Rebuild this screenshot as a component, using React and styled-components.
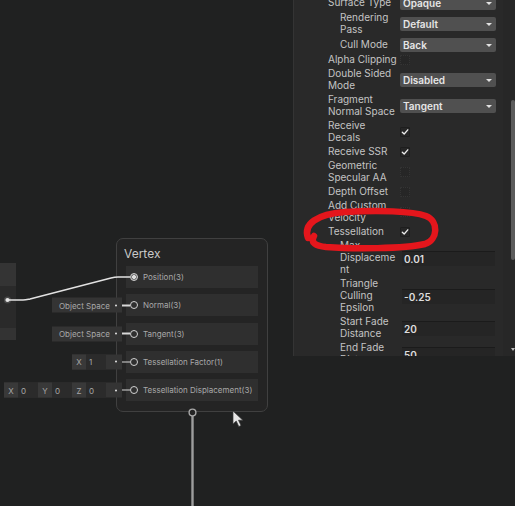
import React from "react";
import styled, { createGlobalStyle } from "styled-components";

const GlobalStyle = createGlobalStyle`
  html, body {
    margin: 0;
    padding: 0;
    background: #202121;
  }
  body {
    font-family: Inter, "Noto Sans", sans-serif;
  }
`;

const Canvas = styled.div`
  position: relative;
  width: 515px;
  height: 506px;
  overflow: hidden;
  background: #202121;
`;

/* ---------- graph inspector ---------- */

const Inspector = styled.div`
  position: absolute;
  left: 293px;
  top: 0;
  width: 222px;
  height: 356px;
  box-sizing: border-box;
  background: #292929;
  border-left: 1px solid #343434;
  overflow: hidden;
`;

const PropList = styled.div`
  display: flex;
  flex-direction: column;
  gap: 2px;
  margin-top: -5px;
`;

const PropRow = styled.div`
  display: flex;
  align-items: center;
  min-height: 12px;
  padding-left: 34px;
`;

const PropLabel = styled.div`
  width: ${(p) => 72 - p.$indent}px;
  margin-left: ${(p) => p.$indent}px;
  font-size: 10px;
  line-height: 12px;
  color: #c4c4c4;
  white-space: nowrap;
`;

const Value = styled.div`
  width: 96px;
  display: flex;
  transform: translateY(1px);
`;

const Dropdown = styled.div`
  width: 96px;
  height: 14px;
  box-sizing: border-box;
  padding: 0 4px 0 3px;
  display: flex;
  align-items: center;
  justify-content: space-between;
  background: #505050;
  border-radius: 2px;
  font-size: 10px;
  font-weight: 600;
  color: #e6e6e6;
`;

const Caret = styled.span`
  width: 0;
  height: 0;
  border-left: 3px solid transparent;
  border-right: 3px solid transparent;
  border-top: 3.5px solid #e2e2e2;
`;

const Checkbox = styled.div`
  width: 10px;
  height: 10px;
  box-sizing: border-box;
  border: 1px solid ${(p) => (p.$checked ? "#1e1e1e" : "#343434")};
  border-style: ${(p) => (p.$checked ? "solid" : "dotted")};
  background: #262626;
  border-radius: 1px;
  display: flex;
  align-items: center;
  justify-content: center;
`;

const FloatField = styled.div`
  width: 93px;
  height: 15px;
  margin-left: 1.5px;
  box-sizing: border-box;
  padding-left: 2.5px;
  display: flex;
  align-items: center;
  background: #252525;
  border-top: 1px solid #1b1b1b;
  font-size: 10px;
  font-weight: 600;
  color: #dedede;
`;

const ScrollTrack = styled.div`
  position: absolute;
  right: 0;
  top: 0;
  bottom: 0;
  width: 12px;
  background: #272727;
`;

const ScrollThumb = styled.div`
  position: absolute;
  right: 0;
  top: 100px;
  width: 4px;
  height: 160px;
  border-radius: 2px;
  background: #5b5b5b;
`;

const ScrollArrow = styled.span`
  position: absolute;
  right: 0;
  bottom: 5px;
  width: 0;
  height: 0;
  border-left: 2.5px solid transparent;
  border-right: 2.5px solid transparent;
  border-top: 3px solid #bdbdbd;
`;

/* ---------- graph nodes ---------- */

const Node = styled.div`
  position: absolute;
  left: 116px;
  top: 238px;
  width: 152px;
  height: 174px;
  box-sizing: border-box;
  border: 1px solid #404040;
  border-radius: 7px;
  background: #242424;
`;

const NodeTitle = styled.div`
  padding: 7px 0 0 7px;
  font-size: 12px;
  line-height: 16px;
  color: #c8c8c8;
`;

const PortList = styled.div`
  display: flex;
  flex-direction: column;
  gap: 6.3px;
  padding: 4px 9px 0 9px;
`;

const PortRow = styled.div`
  position: relative;
  height: 22px;
  display: flex;
  align-items: center;
  padding-left: 4px;
  background: #2f2f2f;
`;

const PortCircle = styled.span`
  width: 8px;
  height: 8px;
  box-sizing: border-box;
  border-radius: 50%;
  border: 1.5px solid #d2d2d2;
  background: ${(p) =>
    p.$connected
      ? "radial-gradient(circle, #dcdcdc 0 1.6px, #6a6a6a 2.2px)"
      : "#2f2f2f"};
`;

const PortLabel = styled.span`
  margin-left: 5px;
  font-size: 8px;
  color: #a9a9a9;
  white-space: nowrap;
`;

const InlineInput = styled.div`
  position: absolute;
  right: calc(100% - 4px);
  top: 50%;
  transform: translateY(-50%);
  display: flex;
  align-items: center;
`;

const InlineBox = styled.div`
  height: 15px;
  display: flex;
  background: #343434;
  font-size: 8px;
  color: #a8a8a8;
`;

const InlineText = styled.span`
  width: 54px;
  box-sizing: border-box;
  padding-left: 7px;
  display: flex;
  align-items: center;
  white-space: nowrap;
`;

const AxisLabel = styled.span`
  width: 14px;
  display: flex;
  align-items: center;
  justify-content: center;
  background: #393939;
`;

const AxisField = styled.span`
  width: 20px;
  box-sizing: border-box;
  padding-left: 3px;
  display: flex;
  align-items: center;
  background: #2b2b2b;
`;

const DotCell = styled.span`
  width: 16px;
  box-sizing: border-box;
  padding-right: 5px;
  display: flex;
  align-items: center;
  justify-content: flex-end;
  &::after {
    content: "";
    width: 2px;
    height: 2px;
    border-radius: 50%;
    background: #e4e4e4;
  }
`;

const Wire = styled.span`
  width: 8px;
  height: 1.5px;
  background: #d8d8d8;
`;

const LeftNode = styled.div`
  position: absolute;
  left: 0;
  top: 263px;
  width: 16px;
  display: flex;
  flex-direction: column;
`;

const Slab = styled.div`
  height: ${(p) => p.$h}px;
  background: ${(p) => p.$bg};
`;

const Overlay = styled.svg`
  position: absolute;
  left: 0;
  top: 0;
  pointer-events: none;
`;

const props = [
  { label: ["Surface Type"], indent: 0, dropdown: "Opaque" },
  { label: ["Rendering", "Pass"], indent: 12, dropdown: "Default" },
  { label: ["Cull Mode"], indent: 12, dropdown: "Back" },
  { label: ["Alpha Clipping"], indent: 0, check: false },
  { label: ["Double Sided", "Mode"], indent: 0, dropdown: "Disabled" },
  { label: ["Fragment", "Normal Space"], indent: 0, dropdown: "Tangent" },
  { label: ["Receive", "Decals"], indent: 0, check: true },
  { label: ["Receive SSR"], indent: 0, check: true },
  { label: ["Geometric", "Specular AA"], indent: 0, check: false },
  { label: ["Depth Offset"], indent: 0, check: false },
  { label: ["Add Custom", "Velocity"], indent: 0, check: false },
  { label: ["Tessellation"], indent: 0, check: true },
  { label: ["Max", "Displaceme", "nt"], indent: 12, float: "0.01" },
  { label: ["Triangle", "Culling", "Epsilon"], indent: 12, float: "-0.25" },
  { label: ["Start Fade", "Distance"], indent: 12, float: "20" },
  { label: ["End Fade", "Distance"], indent: 12, float: "50" },
];

const ports = [
  { name: "Position(3)", connected: true },
  { name: "Normal(3)", input: { text: "Object Space" } },
  { name: "Tangent(3)", input: { text: "Object Space" } },
  { name: "Tessellation Factor(1)", input: { axes: [["X", "1"]] } },
  {
    name: "Tessellation Displacement(3)",
    input: { axes: [["X", "0"], ["Y", "0"], ["Z", "0"]] },
  },
];

const Check = () => (
  <svg width="8" height="8" viewBox="0 0 8 8">
    <path
      d="M1.3 4.2 L3.2 6 L6.8 1.8"
      fill="none"
      stroke="#ebebeb"
      strokeWidth="1.3"
      strokeLinecap="round"
      strokeLinejoin="round"
    />
  </svg>
);

const PropValue = ({ prop }) => {
  if (prop.dropdown)
    return (
      <Dropdown>
        {prop.dropdown}
        <Caret />
      </Dropdown>
    );
  if (prop.float) return <FloatField>{prop.float}</FloatField>;
  return <Checkbox $checked={prop.check}>{prop.check && <Check />}</Checkbox>;
};

const PortInput = ({ input }) => (
  <InlineInput>
    <InlineBox>
      {input.text && <InlineText>{input.text}</InlineText>}
      {input.axes &&
        input.axes.map(([axis, val]) => (
          <React.Fragment key={axis}>
            <AxisLabel>{axis}</AxisLabel>
            <AxisField>{val}</AxisField>
          </React.Fragment>
        ))}
      <DotCell />
    </InlineBox>
    <Wire />
  </InlineInput>
);

export default function App() {
  return (
    <>
      <GlobalStyle />
      <Canvas>
        <LeftNode>
          <Slab $h={23} $bg="#343434" />
          <Slab $h={42} $bg="#2a2a2a" />
          <Slab $h={12} $bg="#333333" />
        </LeftNode>

        <Node>
          <NodeTitle>Vertex</NodeTitle>
          <PortList>
            {ports.map((p) => (
              <PortRow key={p.name}>
                {p.input && <PortInput input={p.input} />}
                <PortCircle $connected={p.connected} />
                <PortLabel>{p.name}</PortLabel>
              </PortRow>
            ))}
          </PortList>
        </Node>

        <Inspector>
          <PropList>
            {props.map((p) => (
              <PropRow key={p.label.join(" ")}>
                <PropLabel $indent={p.indent}>
                  {p.label.map((line) => (
                    <div key={line}>{line}</div>
                  ))}
                </PropLabel>
                <Value>
                  <PropValue prop={p} />
                </Value>
              </PropRow>
            ))}
          </PropList>
          <ScrollTrack />
          <ScrollThumb />
          <ScrollArrow />
        </Inspector>

        <Overlay width="515" height="506" viewBox="0 0 515 506">
          {/* edge into Position */}
          <path
            d="M8 300 L23 300 C26 300 27 299.6 30 298.9 L111 278 C114 277.2 115 277 118 277 L130 277"
            fill="none"
            stroke="#e2e2e2"
            strokeWidth="1.5"
          />
          <circle cx="7.5" cy="300" r="3.6" fill="rgba(255,255,255,0.14)" />
          <circle cx="7.5" cy="300" r="2.1" fill="#e4e4e4" />

          {/* output edge at bottom */}
          <line x1="192.5" y1="416" x2="192.5" y2="506" stroke="#9d9d9d" strokeWidth="2.4" />
          <circle cx="192.5" cy="412.5" r="3.4" fill="#242424" stroke="#a8a8a8" strokeWidth="1.4" />

          {/* mouse cursor */}
          <path
            d="M233 411 L233 424 L236.2 421 L238.8 426.5 L241 425.5 L238.5 420.2 L242.8 420.2 Z"
            fill="#e6e6e6"
            stroke="#3a3a3a"
            strokeWidth="0.7"
          />

          {/* red hand-drawn loop */}
          <path
            d="M308 238 C303 224 317 214 345 212 C378 210 412 211 426 216 C439 221 438 240 425 244 C404 249 352 249 326 247 C316 246 310 243 314 236"
            fill="none"
            stroke="#e4161c"
            strokeWidth="6.5"
            strokeLinecap="round"
          />
        </Overlay>
      </Canvas>
    </>
  );
}
